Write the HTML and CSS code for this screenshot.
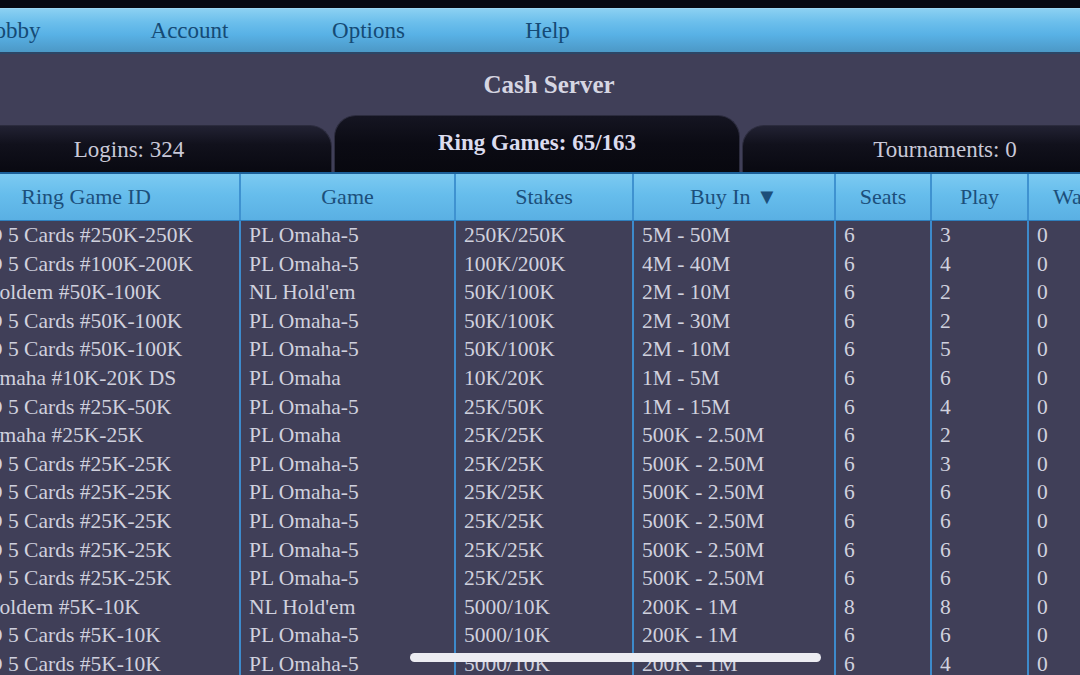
FILE: index.html
```html
<!DOCTYPE html>
<html lang="en">
<head>
    <meta charset="UTF-8">
    <meta name="viewport" content="width=device-width, initial-scale=1.0">
    <title>Cash Server</title>
    <link rel="stylesheet" href="styles.css">
</head>
<body>
    <div class="topbar"></div>
    <nav class="menu">
        <ul>
            <li>Lobby</li>
            <li>Account</li>
            <li>Options</li>
            <li>Help</li>
        </ul>
    </nav>

    <main class="lobby">
        <h1 class="title">Cash Server</h1>

        <div class="tabs">
            <div class="tab">Logins: 324</div>
            <div class="tab active">Ring Games: 65/163</div>
            <div class="tab">Tournaments: 0</div>
        </div>

        <div class="grid">
            <div class="row head">
                <div>Ring Game ID</div>
                <div>Game</div>
                <div>Stakes</div>
                <div>Buy In &#9660;</div>
                <div>Seats</div>
                <div>Play</div>
                <div>Waiting</div>
            </div>
            <div class="row"><div>PLO 5 Cards #250K-250K</div><div>PL Omaha-5</div><div>250K/250K</div><div>5M - 50M</div><div>6</div><div>3</div><div>0</div></div>
            <div class="row"><div>PLO 5 Cards #100K-200K</div><div>PL Omaha-5</div><div>100K/200K</div><div>4M - 40M</div><div>6</div><div>4</div><div>0</div></div>
            <div class="row"><div class="short">Holdem #50K-100K</div><div>NL Hold'em</div><div>50K/100K</div><div>2M - 10M</div><div>6</div><div>2</div><div>0</div></div>
            <div class="row"><div>PLO 5 Cards #50K-100K</div><div>PL Omaha-5</div><div>50K/100K</div><div>2M - 30M</div><div>6</div><div>2</div><div>0</div></div>
            <div class="row"><div>PLO 5 Cards #50K-100K</div><div>PL Omaha-5</div><div>50K/100K</div><div>2M - 10M</div><div>6</div><div>5</div><div>0</div></div>
            <div class="row"><div class="short">Omaha #10K-20K DS</div><div>PL Omaha</div><div>10K/20K</div><div>1M - 5M</div><div>6</div><div>6</div><div>0</div></div>
            <div class="row"><div>PLO 5 Cards #25K-50K</div><div>PL Omaha-5</div><div>25K/50K</div><div>1M - 15M</div><div>6</div><div>4</div><div>0</div></div>
            <div class="row"><div class="short">Omaha #25K-25K</div><div>PL Omaha</div><div>25K/25K</div><div>500K - 2.50M</div><div>6</div><div>2</div><div>0</div></div>
            <div class="row"><div>PLO 5 Cards #25K-25K</div><div>PL Omaha-5</div><div>25K/25K</div><div>500K - 2.50M</div><div>6</div><div>3</div><div>0</div></div>
            <div class="row"><div>PLO 5 Cards #25K-25K</div><div>PL Omaha-5</div><div>25K/25K</div><div>500K - 2.50M</div><div>6</div><div>6</div><div>0</div></div>
            <div class="row"><div>PLO 5 Cards #25K-25K</div><div>PL Omaha-5</div><div>25K/25K</div><div>500K - 2.50M</div><div>6</div><div>6</div><div>0</div></div>
            <div class="row"><div>PLO 5 Cards #25K-25K</div><div>PL Omaha-5</div><div>25K/25K</div><div>500K - 2.50M</div><div>6</div><div>6</div><div>0</div></div>
            <div class="row"><div>PLO 5 Cards #25K-25K</div><div>PL Omaha-5</div><div>25K/25K</div><div>500K - 2.50M</div><div>6</div><div>6</div><div>0</div></div>
            <div class="row"><div class="short">Holdem #5K-10K</div><div>NL Hold'em</div><div>5000/10K</div><div>200K - 1M</div><div>8</div><div>8</div><div>0</div></div>
            <div class="row"><div>PLO 5 Cards #5K-10K</div><div>PL Omaha-5</div><div>5000/10K</div><div>200K - 1M</div><div>6</div><div>6</div><div>0</div></div>
            <div class="row"><div>PLO 5 Cards #5K-10K</div><div>PL Omaha-5</div><div>5000/10K</div><div>200K - 1M</div><div>6</div><div>4</div><div>0</div></div>
        </div>
    </main>

    <div class="home-bar"></div>
</body>
</html>
```

FILE: styles.css
```css
*{padding:0px;margin:0px;box-sizing:border-box;}
ul, li{list-style:none;}

body{
    background:#403f58;
    font-family:"Liberation Serif", "Times New Roman", serif;
    overflow:hidden;
    height:675px;
}

.topbar{height:8px;background:#060812;}

/* top menu */
.menu{
    height:46px;
    background:linear-gradient(#8bd0f2 0%, #6cbfec 30%, #58b1e5 60%, #4c98c6 100%);
    border-top:1px solid #9ad6f4;
    border-bottom:2px solid #2c4666;
}
.menu ul{display:flex;margin-left:-79px;}
.menu li{
    width:179px;
    text-align:center;
    line-height:43px;
    font-size:23px;
    color:#154a75;
}

/* page wider than the screen, scrolled a bit to the right */
.lobby{width:1222px;margin-left:-74px;}

.title{
    height:61px;
    line-height:61px;
    padding-left:24px;
    text-align:center;
    font-size:25px;
    color:#d6d6e2;
}

.tabs{
    display:flex;
    align-items:flex-end;
    gap:2px;
    height:57px;
}
.tab{
    flex:1;
    height:47px;
    line-height:47px;
    text-align:center;
    font-size:23px;
    color:#c9c9d8;
    background:linear-gradient(#222233 0%, #11111c 40%, #090911 100%);
    border:1px solid #2c2c3e;
    border-bottom:0;
    border-radius:22px 22px 0 0;
}
.tab.active{
    height:57px;
    line-height:54px;
    font-weight:bold;
    color:#dcdcee;
    background:linear-gradient(#151522 0%, #0b0b14 50%, #08080f 100%);
}

/* lobby table */
.grid{border-top:2px solid #1b5f98;}
.row{
    display:grid;
    grid-template-columns:315px 215px 178px 202px 96px 97px 119px;
    height:28.6px;
    line-height:28.6px;
    font-size:21.5px;
    color:#d0d1de;
}
.row > div{
    padding-left:8px;
    border-right:2px solid #3d8acb;
    white-space:nowrap;
    overflow:hidden;
}
.row > div:first-child{padding-left:36px;}
.row > div.short{padding-left:58px;}

.row.head{
    height:47px;
    line-height:45px;
    font-size:22px;
    background:linear-gradient(#7ccaf1 0%, #66bdec 45%, #5ab0e3 100%);
    border-bottom:1px solid #2f7fbd;
    color:#1c4f7b;
}
.row.head > div{
    padding-left:0;
    text-align:center;
    border-right-color:#3f92d0;
}
.row.head > div:first-child{padding-left:7px;}

.home-bar{
    position:fixed;
    left:410px;top:653px;
    width:411px;height:9px;
    border-radius:5px;
    background:#ececf2;
}
```
